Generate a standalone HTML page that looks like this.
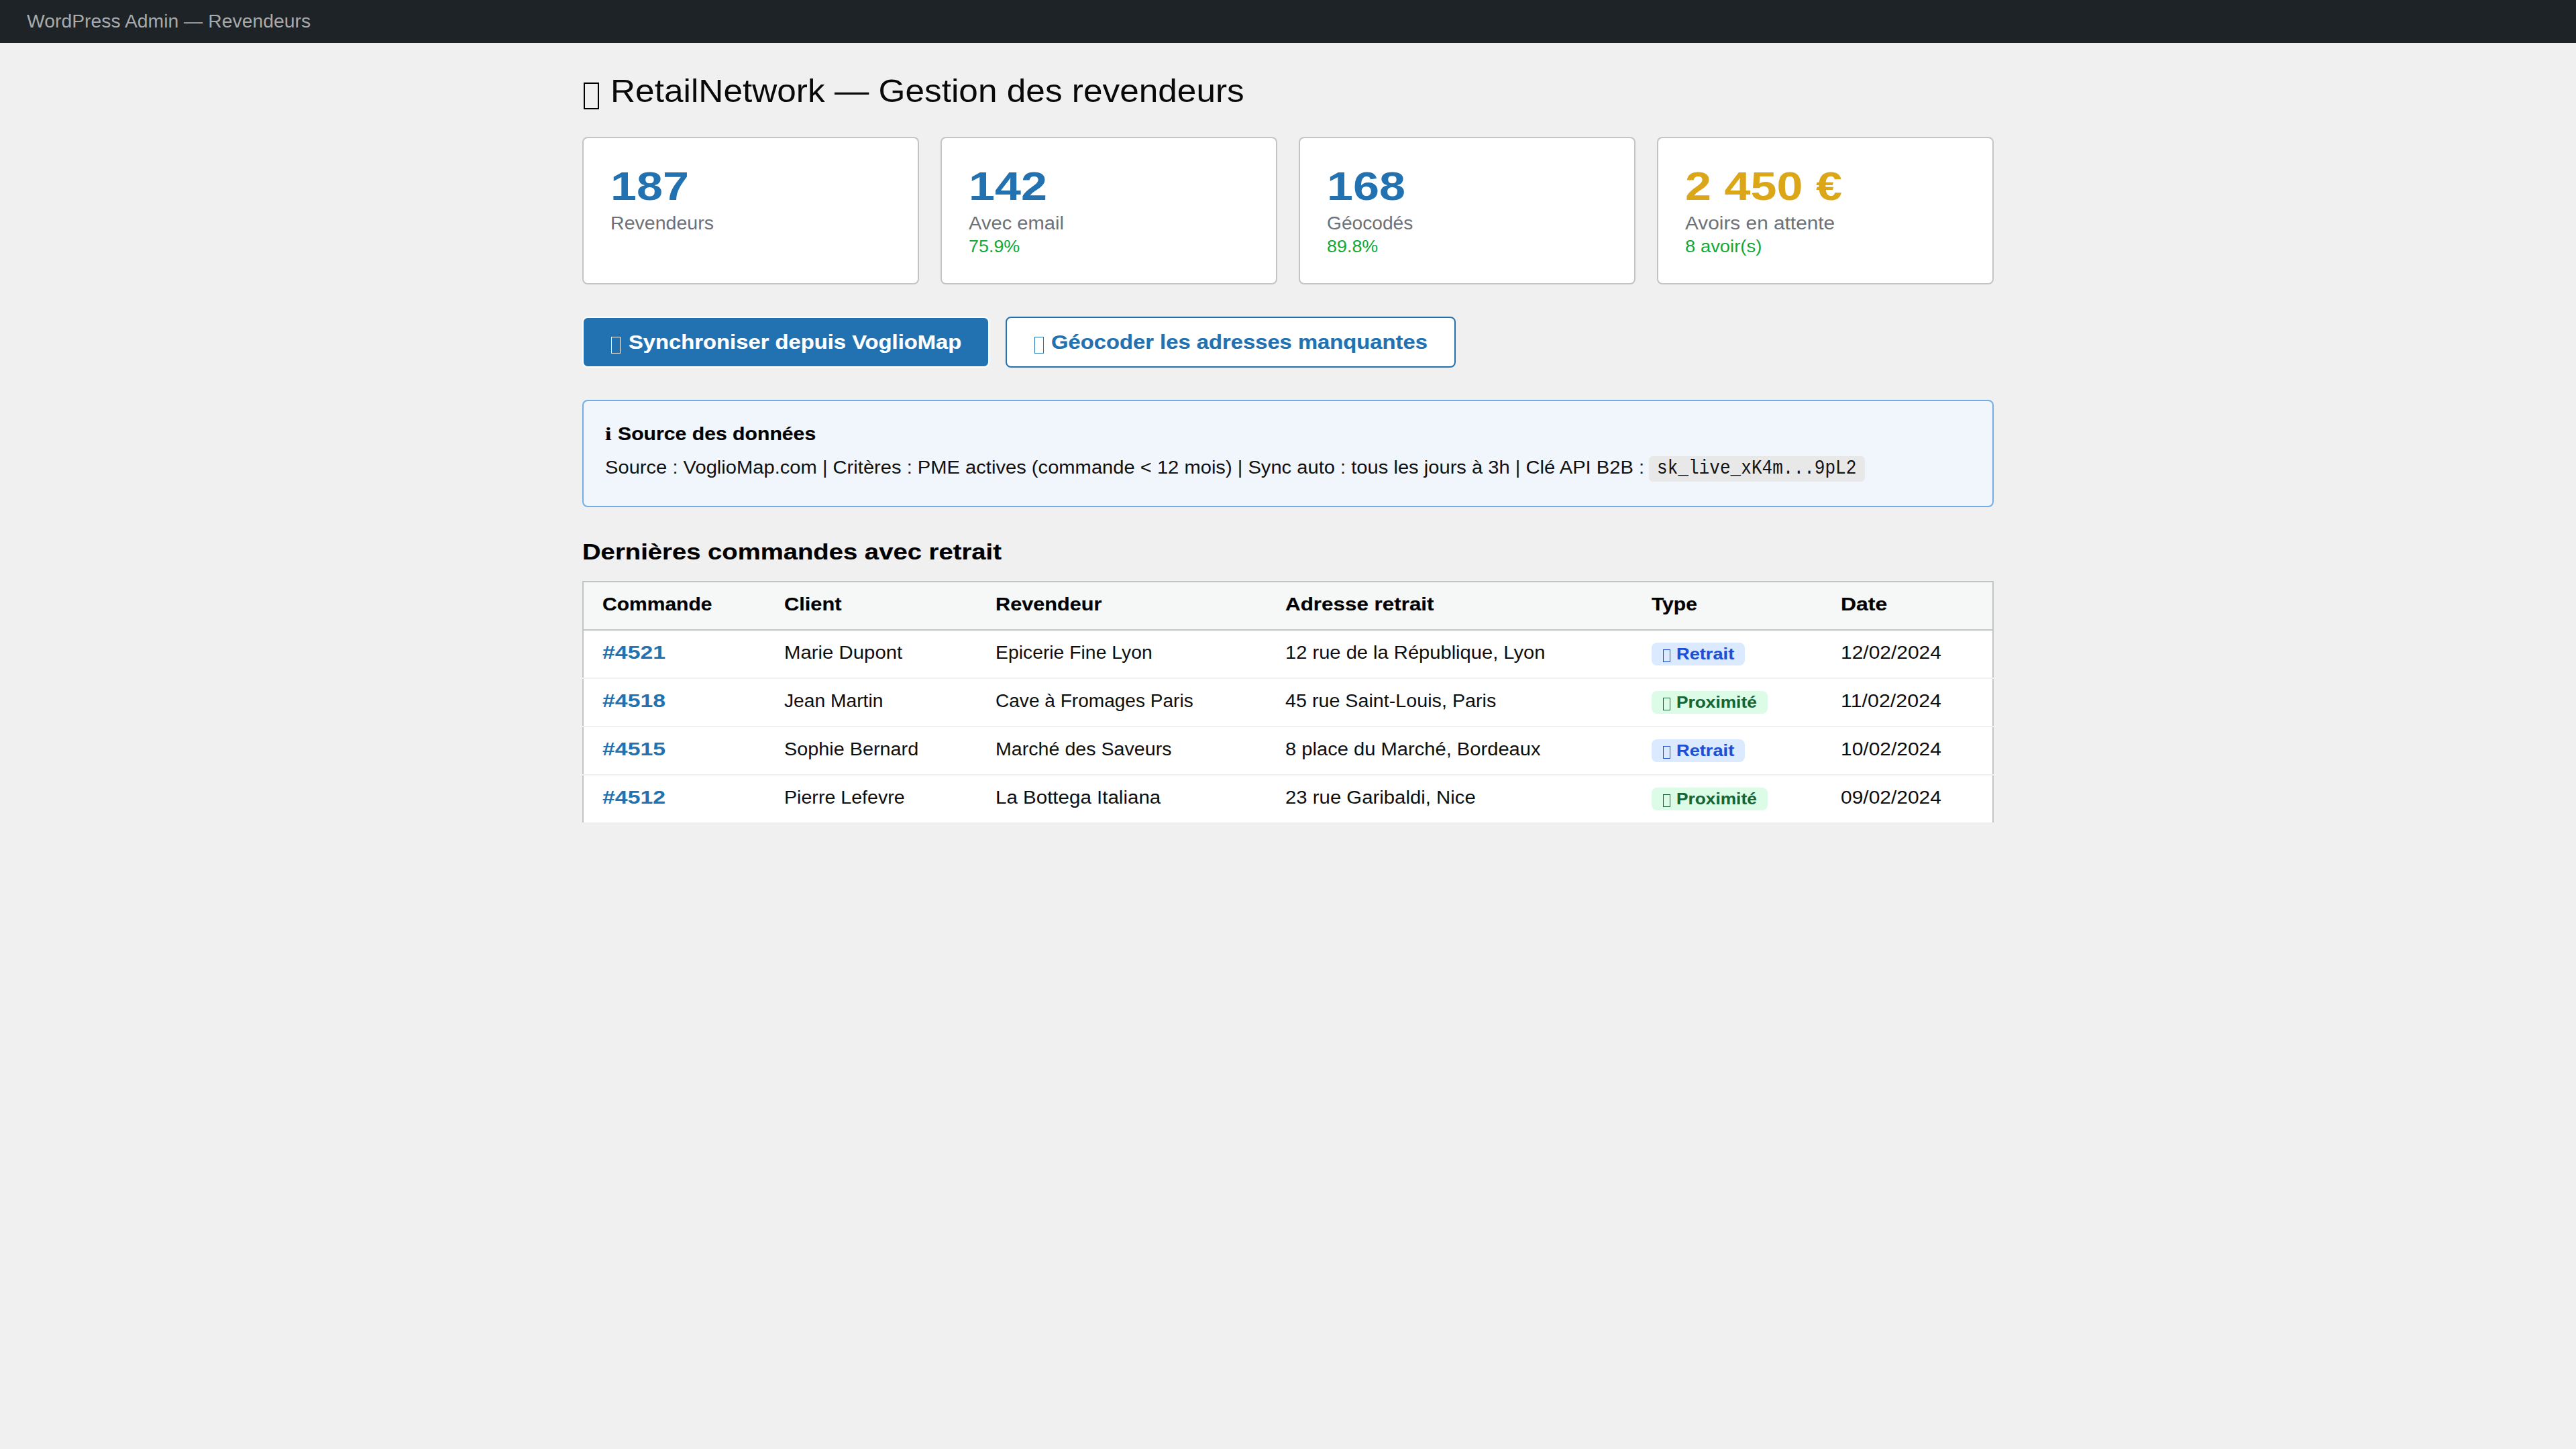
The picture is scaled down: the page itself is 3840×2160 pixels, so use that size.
<!DOCTYPE html>
<html><head><meta charset="utf-8"><title>Revendeurs</title>
<style>
*{box-sizing:border-box}
html,body{margin:0}
body{background:#f0f0f1;font-family:"Liberation Sans", sans-serif;font-size:13.775px;line-height:15px;color:#000;width:1920px;height:1080px;overflow:hidden}
i.t{font-style:normal;display:inline-block;white-space:nowrap;transform-origin:0 0;position:relative}
b.tofu{display:inline-block;height:0;position:relative;font-weight:400}
b.tofu>b{position:absolute;border:0 solid currentColor;display:block}
.topbar{height:32px;background:#1d2327;color:#a7aaad;padding:0 20px;line-height:34px;overflow:hidden}
.k_top{top:-1px}
.wrap{width:1100px;margin:0 auto;padding:24px}
h1{font-size:24.371px;line-height:26px;font-weight:400;margin:0 0 20px;height:26px}
.k_h1{top:0px}
.stats{display:flex;gap:16px;margin-bottom:24px;height:110px}
.card{width:251px;height:110px;background:#fff;border:1px solid #c3c4c7;border-radius:4px;padding:20px}
.num{font-size:29.669px;line-height:33px;height:33px;font-weight:700;color:#2271b1}
.k_num{top:0px}
.num.gold{color:#dba617}
.lbl{color:#646970;margin-top:4px;height:15px}
.k_lbl{top:-1px}
.sub{color:#00a32a;font-size:12.715px;line-height:14px;height:14px;margin-top:2px}
.k_sub{top:0px}
.actions{display:flex;gap:12px;margin-bottom:24px;height:38px}
.btn{font-size:14.834px;font-weight:700;height:38px;line-height:16px;padding:11px 20px 0;border-radius:4px;border:1px solid #fff;background:#2271b1;color:#fff;white-space:nowrap}
.k_btn{top:0px}
.btn.sec{background:#fff;color:#2271b1;border-color:#2271b1}
.notice{background:#f0f6fc;border:1px solid #72aee6;border-radius:4px;padding:16px;margin-bottom:24px;height:80px}
.nh{font-weight:700;line-height:19px;height:19px}
.k_nh{top:-1px}
.k_nh.k_info{top:-1px}
.np{margin:6px 0 2px;line-height:19px;height:19px;white-space:nowrap}
.k_np{top:-1px}
.code{display:inline-block;position:relative;top:-2px;font-family:"Liberation Mono", monospace;font-size:14.381px;background:#e8e8e8;padding:2px 6px;border-radius:3px;height:19px;line-height:15px;vertical-align:baseline}
.k_code{top:1px}
h2{font-size:16.953px;line-height:19px;height:19px;margin:0 0 12px}
.k_h2{top:0px}
table{width:1052px;border-collapse:collapse;background:#fff;border:1px solid #c3c4c7;border-bottom:0}
th{background:#f6f7f7;text-align:left;padding:10px 14px;border-bottom:1px solid #c3c4c7;font-weight:700;white-space:nowrap}
.k_th{top:-1px}
td{padding:9px 14px;border-bottom:1px solid #f0f0f1;white-space:nowrap}
.k_td{top:-1px}
tr:last-child td{border-bottom:0}
.k_lnk{color:#2271b1;font-weight:700}
.badge{display:inline-block;font-size:11.656px;line-height:13px;font-weight:700;padding:2px 8px;border-radius:4px;white-space:nowrap}
.k_badge{top:0px}
.b1{background:#dbeafe;color:#1d4ed8}
.b2{background:#dcfce7;color:#166534}
.k_lbl{opacity:.94}.k_sub{opacity:.93}.k_td{opacity:.94}.k_td.k_lnk{opacity:1}.k_np{opacity:.93}.k_code{opacity:.92}.k_h1{opacity:.96}.k_th{-webkit-text-stroke:.1px currentColor}.k_h2{-webkit-text-stroke:.1px currentColor}.k_nh{-webkit-text-stroke:.1px currentColor}.k_btn{-webkit-text-stroke:.1px currentColor}.k_badge{-webkit-text-stroke:.06px currentColor}
@media (min-width:2400px){html{zoom:2}.k_num{top:-0.5px}.k_sub{top:-0.5px}.k_h1{top:-1.5px}.k_btn{top:-1px}.k_h2{top:-0.5px}.code{top:-1px}.k_code{top:0px}}
</style></head><body>
<div class="topbar"><i class="t k_top" style="width:205.562px;margin-right:5.891px;transform:scaleX(1.02866)">WordPress Admin — Revendeurs</i></div>
<div class="wrap">
<h1><b class="tofu" style="width:21.111px"><b style="left:1.150px;width:11.500px;bottom:-4.071px;height:20.286px;border-width:1.288px"></b></b><i class="t k_h1" style="width:448.141px;margin-right:24.078px;transform:scaleX(1.05373)">RetailNetwork — Gestion des revendeurs</i></h1>
<div class="stats"><div class="card"><div class="num"><i class="t k_num" style="width:49.484px;margin-right:8.969px;transform:scaleX(1.18124)">187</i></div><div class="lbl"><i class="t k_lbl" style="width:74.234px;margin-right:2.750px;transform:scaleX(1.03704)">Revendeurs</i></div></div><div class="card"><div class="num"><i class="t k_num" style="width:49.484px;margin-right:8.969px;transform:scaleX(1.18124)">142</i></div><div class="lbl"><i class="t k_lbl" style="width:67.078px;margin-right:3.891px;transform:scaleX(1.05800)">Avec email</i></div><div class="sub"><i class="t k_sub" style="width:36.031px;margin-right:2.094px;transform:scaleX(1.05811)">75.9%</i></div></div><div class="card"><div class="num"><i class="t k_num" style="width:49.484px;margin-right:8.969px;transform:scaleX(1.18124)">168</i></div><div class="lbl"><i class="t k_lbl" style="width:62.766px;margin-right:1.391px;transform:scaleX(1.02216)">Géocodés</i></div><div class="sub"><i class="t k_sub" style="width:36.031px;margin-right:2.094px;transform:scaleX(1.05811)">89.8%</i></div></div><div class="card"><div class="num gold"><i class="t k_num" style="width:98.953px;margin-right:17.969px;transform:scaleX(1.18159)">2 450 €</i></div><div class="lbl"><i class="t k_lbl" style="width:103.062px;margin-right:8.453px;transform:scaleX(1.08202)">Avoirs en attente</i></div><div class="sub"><i class="t k_sub" style="width:52.953px;margin-right:4.188px;transform:scaleX(1.07908)">8 avoir(s)</i></div></div></div>
<div class="actions"><div class="btn"><b class="tofu" style="width:13.274px"><b style="left:0.700px;width:7.000px;bottom:-2.478px;height:12.348px;border-width:0.784px"></b></b><i class="t k_btn" style="width:224.656px;margin-right:23.516px;transform:scaleX(1.10467)">Synchroniser depuis VoglioMap</i></div><div class="btn sec"><b class="tofu" style="width:13.274px"><b style="left:0.700px;width:7.000px;bottom:-2.478px;height:12.348px;border-width:0.784px"></b></b><i class="t k_btn" style="width:253.844px;margin-right:26.641px;transform:scaleX(1.10495)">Géocoder les adresses manquantes</i></div></div>
<div class="notice"><div class="nh"><i class="t k_nh k_info" style="width:7.656px;margin-right:1.812px;transform:scaleX(1.23673)"><span style="font-family:'Liberation Serif',serif">i</span>&nbsp;</i><i class="t k_nh" style="width:134.641px;margin-right:12.875px;transform:scaleX(1.09562)">Source des données</i></div><div class="np"><i class="t k_np" style="width:735.656px;margin-right:42.469px;transform:scaleX(1.05773)">Source : VoglioMap.com | Critères : PME actives (commande &lt; 12 mois) | Sync auto : tous les jours à 3h | Clé API B2B :&nbsp;</i><span class="code"><i class="t k_code" style="width:163.906px;margin-right:-15.188px;transform:scaleX(0.90734)">sk_live_xK4m...9pL2</i></span></div></div>
<h2><i class="t k_h2" style="width:276.797px;margin-right:35.547px;transform:scaleX(1.12842)">Dernières commandes avec retrait</i></h2>
<table><thead><tr><th><i class="t k_th" style="width:74.969px;margin-right:6.750px;transform:scaleX(1.09004)">Commande</i></th><th><i class="t k_th" style="width:38.250px;margin-right:4.500px;transform:scaleX(1.11765)">Client</i></th><th><i class="t k_th" style="width:71.156px;margin-right:8.016px;transform:scaleX(1.11265)">Revendeur</i></th><th><i class="t k_th" style="width:97.188px;margin-right:13.531px;transform:scaleX(1.13923)">Adresse retrait</i></th><th><i class="t k_th" style="width:31.109px;margin-right:2.812px;transform:scaleX(1.09041)">Type</i></th><th><i class="t k_th" style="width:29.844px;margin-right:4.766px;transform:scaleX(1.15969)">Date</i></th></tr></thead><tbody><tr><td><i class="t k_td k_lnk" style="width:38.281px;margin-right:8.797px;transform:scaleX(1.22980)">#4521</i></td><td><i class="t k_td" style="width:82.641px;margin-right:5.422px;transform:scaleX(1.06561)">Marie Dupont</i></td><td><i class="t k_td" style="width:113.500px;margin-right:3.266px;transform:scaleX(1.02877)">Epicerie Fine Lyon</i></td><td><i class="t k_td" style="width:183.172px;margin-right:10.422px;transform:scaleX(1.05690)">12 rue de la République, Lyon</i></td><td><span class="badge b1"><b class="tofu" style="width:10.430px"><b style="left:0.550px;width:5.500px;bottom:-1.947px;height:9.702px;border-width:0.616px"></b></b><i class="t k_badge" style="width:36.875px;margin-right:6.203px;transform:scaleX(1.16822)">Retrait</i></span></td><td><i class="t k_td" style="width:68.906px;margin-right:6.031px;transform:scaleX(1.08753)">12/02/2024</i></td></tr><tr><td><i class="t k_td k_lnk" style="width:38.281px;margin-right:8.797px;transform:scaleX(1.22980)">#4518</i></td><td><i class="t k_td" style="width:71.922px;margin-right:1.734px;transform:scaleX(1.02411)">Jean Martin</i></td><td><i class="t k_td" style="width:144.594px;margin-right:2.656px;transform:scaleX(1.01837)">Cave à Fromages Paris</i></td><td><i class="t k_td" style="width:150.750px;margin-right:6.312px;transform:scaleX(1.04187)">45 rue Saint-Louis, Paris</i></td><td><span class="badge b2"><b class="tofu" style="width:10.430px"><b style="left:0.550px;width:5.500px;bottom:-1.947px;height:9.702px;border-width:0.616px"></b></b><i class="t k_badge" style="width:53.062px;margin-right:6.812px;transform:scaleX(1.12839)">Proximité</i></span></td><td><i class="t k_td" style="width:67.875px;margin-right:7.062px;transform:scaleX(1.10405)">11/02/2024</i></td></tr><tr><td><i class="t k_td k_lnk" style="width:38.281px;margin-right:8.797px;transform:scaleX(1.22980)">#4515</i></td><td><i class="t k_td" style="width:95.672px;margin-right:4.375px;transform:scaleX(1.04573)">Sophie Bernard</i></td><td><i class="t k_td" style="width:126.250px;margin-right:4.938px;transform:scaleX(1.03911)">Marché des Saveurs</i></td><td><i class="t k_td" style="width:179.828px;margin-right:10.344px;transform:scaleX(1.05752)">8 place du Marché, Bordeaux</i></td><td><span class="badge b1"><b class="tofu" style="width:10.430px"><b style="left:0.550px;width:5.500px;bottom:-1.947px;height:9.702px;border-width:0.616px"></b></b><i class="t k_badge" style="width:36.875px;margin-right:6.203px;transform:scaleX(1.16822)">Retrait</i></span></td><td><i class="t k_td" style="width:68.906px;margin-right:6.031px;transform:scaleX(1.08753)">10/02/2024</i></td></tr><tr><td><i class="t k_td k_lnk" style="width:38.281px;margin-right:8.797px;transform:scaleX(1.22980)">#4512</i></td><td><i class="t k_td" style="width:86.469px;margin-right:3.344px;transform:scaleX(1.03867)">Pierre Lefevre</i></td><td><i class="t k_td" style="width:114.812px;margin-right:8.250px;transform:scaleX(1.07186)">La Bottega Italiana</i></td><td><i class="t k_td" style="width:133.141px;margin-right:8.688px;transform:scaleX(1.06525)">23 rue Garibaldi, Nice</i></td><td><span class="badge b2"><b class="tofu" style="width:10.430px"><b style="left:0.550px;width:5.500px;bottom:-1.947px;height:9.702px;border-width:0.616px"></b></b><i class="t k_badge" style="width:53.062px;margin-right:6.812px;transform:scaleX(1.12839)">Proximité</i></span></td><td><i class="t k_td" style="width:68.906px;margin-right:6.031px;transform:scaleX(1.08753)">09/02/2024</i></td></tr></tbody></table>
</div>
</body></html>
